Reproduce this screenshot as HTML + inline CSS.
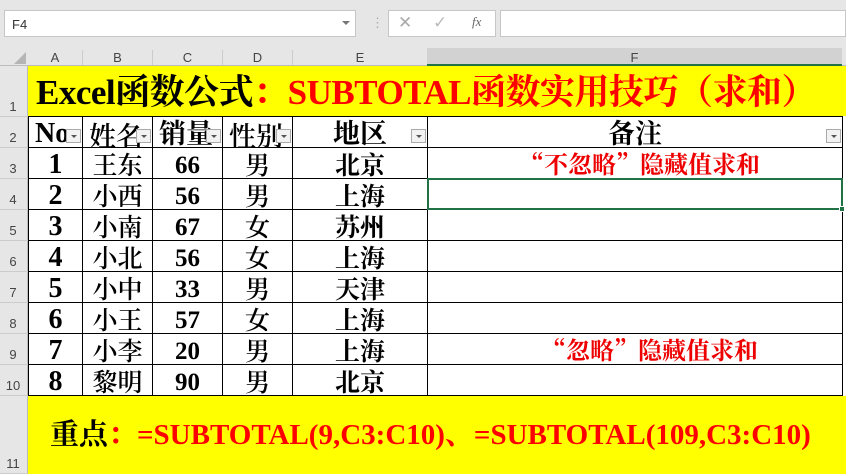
<!DOCTYPE html><html><head><meta charset="utf-8"><style>
body{margin:0;width:846px;height:474px;overflow:hidden;background:#fff;position:relative;font-family:"Liberation Serif","Noto Serif CJK SC",serif}
.a{position:absolute;box-sizing:border-box}
.hd{font-family:"Liberation Sans",sans-serif;font-size:13px;color:#444;text-align:center}
.c{position:absolute;box-sizing:border-box;display:flex;align-items:center;justify-content:center;font-weight:bold;font-size:26px;color:#000;line-height:1;padding-top:3px;overflow:hidden;white-space:nowrap}
.dd{position:absolute;width:15px;height:14px;border:1px solid #aaa;background:#f2f2f2;box-sizing:border-box}
.dd:after{content:"";position:absolute;left:4px;top:5px;border-left:3px solid transparent;border-right:3px solid transparent;border-top:3px solid #555}
</style></head><body>
<div class="a" style="left:0;top:0;width:846px;height:66px;background:#e6e6e6"></div>
<div class="a" style="left:4px;top:10px;width:352px;height:27px;background:#fff;border:1px solid #c6c6c6;font:13px 'Liberation Sans',sans-serif;padding:6px 7px;color:#333">F4</div>
<div class="a" style="left:342px;top:21px;border-left:4px solid transparent;border-right:4px solid transparent;border-top:4px solid #777"></div>
<div class="a" style="left:371px;top:15px;color:#aaa;font:13px sans-serif">⋮</div>
<div class="a" style="left:388px;top:10px;width:108px;height:27px;background:#fff;border:1px solid #c6c6c6"></div>
<div class="a" style="left:398px;top:13px;color:#aaa;font:17px 'DejaVu Sans',sans-serif">✕</div>
<div class="a" style="left:433px;top:13px;color:#bbb;font:17px 'DejaVu Sans',sans-serif">✓</div>
<div class="a" style="left:472px;top:14px;color:#666;font:italic 13px 'Liberation Serif',serif">fx</div>
<div class="a" style="left:500px;top:10px;width:346px;height:27px;background:#fff;border:1px solid #c6c6c6"></div>
<div class="a" style="left:0;top:48px;width:846px;height:18px;background:#e6e6e6;border-bottom:1px solid #bbb"></div>
<div class="a" style="left:427px;top:48px;width:415px;height:18px;background:#d2d2d2;border-bottom:2px solid #217346"></div>
<div class="a" style="left:14px;top:52px;border-left:12px solid transparent;border-bottom:12px solid #b5b5b5"></div>
<div class="a hd" style="left:28px;top:50px;width:54px">A</div>
<div class="a hd" style="left:82px;top:50px;width:70px;border-left:1px solid #ccc">B</div>
<div class="a hd" style="left:152px;top:50px;width:70px;border-left:1px solid #ccc">C</div>
<div class="a hd" style="left:222px;top:50px;width:70px;border-left:1px solid #ccc">D</div>
<div class="a hd" style="left:292px;top:50px;width:135px;border-left:1px solid #ccc">E</div>
<div class="a hd" style="left:427px;top:50px;width:415px">F</div>
<div class="a" style="left:0;top:66px;width:28px;height:408px;background:#e6e6e6;border-right:1px solid #bbb"></div>
<div id="rh"></div>
<div class="a" style="left:28px;top:66px;width:818px;height:50px;background:#ffff00"></div>
<div class="a" style="left:36px;top:73px;font-weight:bold;font-size:35px;line-height:40px;white-space:nowrap;color:#000;letter-spacing:-0.5px">Excel函数公式<span style="color:#f00">：SUBTOTAL函数实用技巧（求和）</span></div>
<div class="a" style="left:28px;top:396px;width:818px;height:78px;background:#ffff00"></div>
<div class="a" style="left:50px;top:418px;font-weight:bold;font-size:29px;line-height:34px;white-space:nowrap;color:#000">重点<span style="color:#f00">：=SUBTOTAL(9,C3:C10)、=SUBTOTAL(109,C3:C10)</span></div>
<div id="g"></div>
<script>
var ys=[66,116,147,178,209,240,271,302,333,364,395,473];
var xs=[28,82,152,222,292,427,842];
var h='';
for(var i=0;i<11;i++){h+='<div class="a hd" style="left:0;top:'+(ys[i+1]-17)+'px;width:26px;text-align:center">'+(i+1)+'</div>';h+='<div class="a" style="left:0;top:'+ys[i+1]+'px;width:28px;height:1px;background:#ccc"></div>';}
document.getElementById('rh').innerHTML=h;
var d=[["No","姓名","销量","性别","地区","备注"],["1","王东","66","男","北京","“不忽略”隐藏值求和"],["2","小西","56","男","上海",""],["3","小南","67","女","苏州",""],["4","小北","56","女","上海",""],["5","小中","33","男","天津",""],["6","小王","57","女","上海",""],["7","小李","20","男","上海","“忽略”隐藏值求和"],["8","黎明","90","男","北京",""]];
var g='';
for(var r=0;r<9;r++){var y=ys[r+1],hh=ys[r+2]-y;for(var c=0;c<6;c++){var x=xs[c],w=xs[c+1]-x;var t=d[r][c];var st='';
if(c==0&&r>0)st='font-size:28px;padding-top:4px;';
if(c==2&&r>0)st='font-size:25px;padding-top:4px;';
if(c==1||c==3)st='font-weight:600;font-family:\'Noto Serif CJK SC\',serif;font-size:25px;';
if(c==4&&r>0)st='font-family:\'Noto Serif CJK SC\',serif;font-size:25px;';
if(c==5&&r>0)st='color:#e00;font-size:24px;font-family:\'Noto Serif CJK SC\',serif;align-items:flex-start;padding-top:3px;'+(r==1?'padding-left:10px;':'padding-left:30px;');
if(r==0){st+='font-size:27px;padding-top:4px;';if(c==0)st+='font-family:\'Liberation Serif\',serif;font-size:28px;';}
if(r==0)st+='justify-content:'+(c<4?'flex-start;padding-left:6px':'center')+';';
g+='<div class="c" style="left:'+x+'px;top:'+y+'px;width:'+(w+1)+'px;height:'+(hh+1)+'px;border:1px solid #000;'+st+'">'+t+'</div>';
if(r==0)g+='<div class="dd" style="left:'+(x+w-16)+'px;top:'+(y+13)+'px"></div>';}}
g+='<div class="a" style="left:427px;top:178px;width:416px;height:32px;border:2px solid #217346"></div><div class="a" style="left:839px;top:206px;width:6px;height:6px;background:#217346;border:1px solid #fff"></div>';
document.getElementById('g').innerHTML=g;
</script>
</body></html>
